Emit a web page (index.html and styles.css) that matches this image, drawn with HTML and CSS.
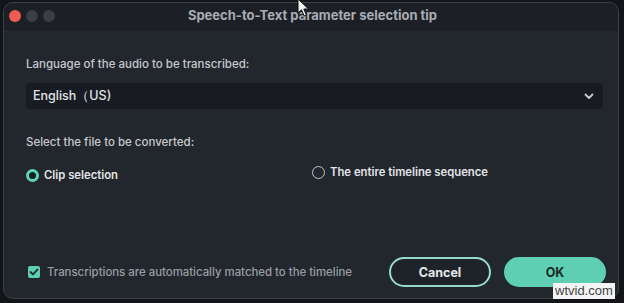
FILE: index.html
```html
<!DOCTYPE html>
<html>
<head>
<meta charset="utf-8">
<link rel="stylesheet" href="styles.css">
</head>
<body>
<div class="window">
  <div class="titlebar">
    <div class="lights">
      <span class="light red"></span>
      <span class="light grey"></span>
      <span class="light grey"></span>
    </div>
    <div class="title">Speech-to-Text parameter selection tip</div>
  </div>
  <div class="content">
    <div class="label lang-label">Language of the audio to be transcribed:</div>
    <div class="select">
      <span>English（US)</span>
      <svg class="chev" width="10" height="7" viewBox="0 0 10 7"><path d="M1.5 1.5 L5 5 L8.5 1.5" fill="none" stroke="#c9ccd1" stroke-width="1.8" stroke-linecap="round" stroke-linejoin="round"/></svg>
    </div>
    <div class="label file-label">Select the file to be converted:</div>
    <div class="radios">
      <div class="radio on"><span class="dot"></span><span>Clip selection</span></div>
      <div class="radio off"><span class="dot"></span><span>The entire timeline sequence</span></div>
    </div>
    <div class="footer">
      <div class="check">
        <span class="box"><svg width="10" height="8" viewBox="0 0 10 8"><path d="M1.5 4 L4 6.3 L8.5 1.7" fill="none" stroke="#1b2a27" stroke-width="1.8" stroke-linecap="round" stroke-linejoin="round"/></svg></span>
        <span>Transcriptions are automatically matched to the timeline</span>
      </div>
      <div class="buttons">
        <button class="btn cancel">Cancel</button>
        <button class="btn ok">OK</button>
      </div>
    </div>
  </div>
</div>
<svg class="cursor" width="14" height="20" viewBox="0 0 14 20"><path d="M1 1 L1 15 L4.5 11.8 L7.2 18 L9.4 17 L6.8 11 L11.5 11 Z" fill="#f2f2f2" stroke="#111" stroke-width="1"/></svg>
<div class="watermark">wtvid.com</div>
</body>
</html>
```
FILE: styles.css
```css
html, body {
  margin: 0;
  padding: 0;
}
body {
  width: 624px;
  height: 303px;
  background: #121418;
  font-family: "Inter", "Liberation Sans", sans-serif;
  position: relative;
  overflow: hidden;
}
.window {
  margin: 2px 0 0 3px;
  width: 614px;
  height: 295px;
  border: 1px solid #3c4148;
  border-radius: 10px;
  background: #22272e;
  overflow: hidden;
  display: flex;
  flex-direction: column;
}
.titlebar {
  height: 27px;
  background: #1c2026;
  display: flex;
  align-items: center;
  position: relative;
  border-bottom: 1px solid #181b20;
  box-sizing: border-box;
  padding-bottom: 3px;
}
.lights {
  display: flex;
  gap: 5px;
  padding-left: 5px;
  margin-top: 2px;
}
.light {
  width: 12px;
  height: 12px;
  border-radius: 50%;
  background: #3a3e45;
}
.light.red { background: #ee5b55; }
.title {
  flex: 1;
  text-align: center;
  color: #a9acb1;
  font-weight: 700;
  font-size: 13px;
  margin-right: 48px;
}
.content {
  flex: 1;
  padding: 0 12px 0 22px;
  display: flex;
  flex-direction: column;
}
.label {
  color: #c7c9cd;
  font-size: 11.5px;
  font-weight: 500;
}
.lang-label {
  margin-top: 27px;
}
.select {
  margin-top: 12px;
  margin-right: 3px;
  height: 26px;
  background: #181c22;
  border-radius: 4px;
  display: flex;
  align-items: center;
  justify-content: space-between;
  padding: 0 9px 0 7px;
  color: #e0e2e5;
  font-size: 12.5px;
  font-weight: 500;
}
.chev { margin-top: 1px; }
.file-label {
  margin-top: 26px;
}
.radios {
  margin-top: 19px;
  display: flex;
  align-items: flex-start;
}
.radio {
  display: flex;
  align-items: center;
  gap: 5px;
  color: #e2e4e7;
  font-size: 11.3px;
  font-weight: 600;
}
.radio.off {
  margin-left: 194px;
  margin-top: -3px;
}
.dot {
  box-sizing: border-box;
  width: 13px;
  height: 13px;
  border-radius: 50%;
}
.radio.on .dot {
  background: #17211f;
  border: 3.5px solid #5fd4b6;
}
.radio.off .dot {
  border: 1.3px solid #c3c6cb;
}
.footer {
  margin-top: auto;
  margin-bottom: 11px;
  display: flex;
  align-items: center;
  justify-content: space-between;
}
.check {
  display: flex;
  align-items: center;
  gap: 7px;
  color: #9a9da3;
  font-size: 11.4px;
  font-weight: 500;
  margin-left: 2px;
}
.box {
  width: 12px;
  height: 12px;
  border-radius: 2px;
  background: #5ecfb2;
  display: flex;
  align-items: center;
  justify-content: center;
}
.buttons {
  display: flex;
  gap: 13px;
}
.btn {
  box-sizing: border-box;
  width: 102px;
  height: 30px;
  border-radius: 15px;
  font-family: "Inter", "Liberation Sans", sans-serif;
  font-weight: 700;
  font-size: 12.5px;
}
.btn.cancel {
  background: #1e2329;
  border: 2px solid #93dcca;
  color: #e6e7e9;
}
.btn.ok {
  background: #5ecfb2;
  border: none;
  color: #1d2b28;
}
.cursor {
  position: absolute;
  left: 297px;
  top: -2px;
}
.watermark {
  position: absolute;
  left: 553px;
  top: 283px;
  padding: 0 2px;
  background: #f4f4f4;
  color: #444;
  font-family: "Liberation Sans", sans-serif;
  font-size: 13px;
  line-height: 16px;
}
```
